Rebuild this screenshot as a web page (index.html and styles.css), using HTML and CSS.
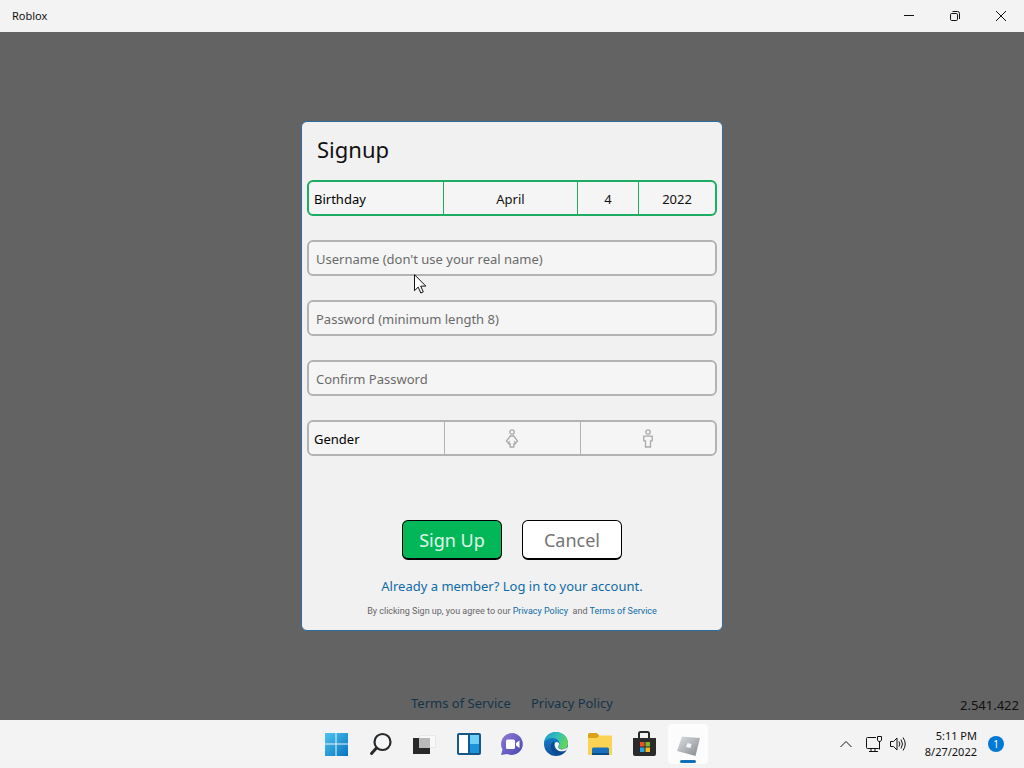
FILE: index.html
```html
<!DOCTYPE html>
<html lang="en">
  <head>
    <meta charset="utf-8">
    <title>Roblox</title>
    <link rel="stylesheet" href="styles.css">
  </head>
  <body>
    <header class="titlebar">
      <span class="window-title">Roblox</span>
      <div class="window-controls">
        <button aria-label="Minimize">
          <svg width="12" height="12" viewBox="0 0 12 12"><path d="M1 5.500h10"/></svg>
        </button>
        <button aria-label="Restore">
          <svg width="12" height="12" viewBox="0 0 12 12"><rect x="1.500" y="3.500" width="7" height="7" rx="1.200"/><path d="M3.500 1.500H8.500a2 2 0 0 1 2 2v5.500"/></svg>
        </button>
        <button aria-label="Close">
          <svg width="12" height="12" viewBox="0 0 12 12"><path d="M1 1l10 10M11 1L1 11"/></svg>
        </button>
      </div>
    </header>

    <main>
      <div class="overlay">
        <form class="dialog" onsubmit="return false">
          <h1>Signup</h1>

          <div class="group birthday" role="group" aria-labelledby="birthday">
            <span class="group-label" id="birthday">Birthday</span>
            <select aria-label="Month"><option>April</option></select>
            <select aria-label="Day"><option>4</option></select>
            <select aria-label="Year"><option>2022</option></select>
          </div>

          <div class="field">
            <input type="text" aria-label="Username" placeholder="Username (don't use your real name)">
            <svg class="cursor" width="13" height="21" viewBox="0 0 13 21"><path d="M.5.7v16l3.700-3.600 2.600 5.900 2.500-1.100-2.600-5.800h5.100z"/></svg>
          </div>
          <div class="field">
            <input type="password" aria-label="Password" placeholder="Password (minimum length 8)">
          </div>
          <div class="field">
            <input type="password" aria-label="Confirm Password" placeholder="Confirm Password">
          </div>

          <div class="group gender" role="radiogroup" aria-labelledby="gender">
            <span class="group-label" id="gender">Gender</span>
            <label>
              <input type="radio" name="gender" value="female" aria-label="Female">
              <svg width="14" height="20" viewBox="0 0 14 20"><circle cx="7" cy="3" r="2.200"/><path d="M5.300 7h3.400L12.500 12l-1.500 1.800-1.200-.8.200 2H8.800v3H5.200v-3H4l.2-2-1.200.8L1.500 12z"/></svg>
            </label>
            <label>
              <input type="radio" name="gender" value="male" aria-label="Male">
              <svg width="14" height="20" viewBox="0 0 14 20"><circle cx="7" cy="3" r="2.200"/><path d="M2.800 7.200h8.400v4.600H9.500v6.200h-5v-6.200H2.800z"/></svg>
            </label>
          </div>

          <div class="actions">
            <button class="signup" type="submit">Sign Up</button>
            <button class="cancel" type="button">Cancel</button>
          </div>
          <p class="login"><a href="#">Already a member? Log in to your account.</a></p>
          <p class="legal">By clicking Sign up, you agree to our <a href="#">Privacy Policy</a>&nbsp; and <a href="#">Terms of Service</a></p>
        </form>
      </div>

      <footer>
        <nav>
          <a href="#">Terms of Service</a>
          <a href="#">Privacy Policy</a>
        </nav>
        <span class="version">2.541.422</span>
      </footer>
    </main>

    <div class="taskbar">
      <div class="apps">
        <button aria-label="Start">
          <svg width="26" height="26" viewBox="0 0 26 26">
            <defs><linearGradient id="win" x1="0" y1="0" x2="1" y2="1"><stop offset="0" stop-color="#4cc5f1"/><stop offset="1" stop-color="#0873bf"/></linearGradient></defs>
            <path fill="url(#win)" d="M2 2h10.500v10.500H2zM13.500 2H25v10.500H13.500zM2 13.500h10.500V25H2zM13.500 13.500H25V25H13.500z"/>
          </svg>
        </button>
        <button aria-label="Search">
          <svg width="26" height="26" viewBox="0 0 26 26"><circle cx="15.500" cy="11" r="8" fill="#f5f6f7" stroke="#292929" stroke-width="2.200"/><path d="M9.500 17L4.500 22.500" stroke="#292929" stroke-width="3" stroke-linecap="round"/></svg>
        </button>
        <button aria-label="Task view">
          <svg width="26" height="26" viewBox="0 0 26 26"><path fill="#292929" d="M2 7h17v16H2z"/><path fill="#f8f8f8" stroke="#e8e8e8" d="M8.500 4.500h16v12h-16z"/><path fill="#b9b9b9" d="M8 7h11v10H8z"/></svg>
        </button>
        <button aria-label="Widgets">
          <svg width="26" height="26" viewBox="0 0 26 26"><rect x="2" y="2" width="24" height="22" rx="2" fill="#17578a"/><path fill="#fff" d="M4 4h9v18H4z"/><path fill="#6ed0fb" d="M15 4h9v9h-9z"/><path fill="#1c94dc" d="M15 13h9v9h-9z"/></svg>
        </button>
        <button aria-label="Chat">
          <svg width="26" height="26" viewBox="0 0 26 26">
            <defs><linearGradient id="chat" x1="0" y1="0" x2="1" y2="1"><stop offset="0" stop-color="#927cd0"/><stop offset="1" stop-color="#4844b6"/></linearGradient></defs>
            <path fill="url(#chat)" d="M13 2a11 11 0 1 1-4.800 21L2 24l1.500-5.500A11 11 0 0 1 13 2z"/><rect x="7" y="8.500" width="9" height="9.500" rx="1.500" fill="#fff"/><path fill="#fff" d="M17 12l3.500-2.500v7.500L17 14.500z"/>
          </svg>
        </button>
        <button aria-label="Microsoft Edge">
          <svg width="26" height="26" viewBox="0 0 26 26">
            <defs>
              <linearGradient id="edge-top" x1="0" y1="0" x2="1" y2=".4"><stop offset="0" stop-color="#1b9ad6"/><stop offset=".6" stop-color="#35c2b1"/><stop offset="1" stop-color="#63d45b"/></linearGradient>
              <linearGradient id="edge-base" x1="0" y1="0" x2="0" y2="1"><stop offset="0" stop-color="#168bd5"/><stop offset="1" stop-color="#104f9e"/></linearGradient>
            </defs>
            <circle cx="13" cy="13" r="12" fill="url(#edge-base)"/>
            <path fill="#0d4b91" d="M11 10c-3 2-4 5-2.500 8.500S14 24.500 17 24c3-.6 5.500-3 6.500-5-3 2-7.500 2-10-.5-2.500-2-3-5-2.500-8.500z"/>
            <path fill="url(#edge-top)" d="M1.200 11C2 5 7 1 13 1c7 0 12 5 12 11 0 4-3 6-6 6-2.500 0-4-1-3.800-2 .3-1 1.300-1.500 1.300-3.500 0-3-3-5.500-7-5.500-4 0-7 2-8.300 4z"/>
            <path fill="#f3f3f3" d="M12 12c1-2 4-1 4.200 1 0 1.500-1.700 2.500-1 3.800.9 1.300 3 1.900 5 1.500 2-.3 3.500-1.500 4.200-2.500l-.8 3c-3 2.300-7.600 1.900-9.900-.4C11.800 16.600 11.200 14 12 12z"/>
          </svg>
        </button>
        <button aria-label="File Explorer">
          <svg width="26" height="26" viewBox="0 0 26 26"><path fill="#dda318" d="M1 3.500q0-1.500 1.500-1.500H10l2.500 3H24v8H1z"/><path fill="#fbd354" d="M1 7h9l2.500-2.500H25V24H1z"/><path fill="#1b70bd" d="M5 18q0-1.500 1.500-1.500h14q1.500 0 1.500 1.500v6H5z"/><path fill="#0c4d87" d="M5 22h17v2H5z"/></svg>
        </button>
        <button aria-label="Microsoft Store">
          <svg width="26" height="26" viewBox="0 0 26 26"><path d="M8 8V2.500q0-1.500 1.500-1.500h7Q18 1 18 2.500V8" fill="none" stroke="#2a2a2a" stroke-width="2"/><path fill="#2b2b2b" d="M2 7h23v16q0 2-2 2H4q-2 0-2-2z"/><path fill="#ee5028" d="M9 11h4.500v4.500H9z"/><path fill="#7fb72f" d="M14.500 11H19v4.500h-4.500z"/><path fill="#23a5e8" d="M9 16.500h4.500V21H9z"/><path fill="#f7bb19" d="M14.500 16.500H19V21h-4.500z"/></svg>
        </button>
        <button class="active" aria-label="Roblox">
          <svg width="26" height="26" viewBox="0 0 26 26">
            <defs><linearGradient id="rbx" x1="0" y1="0" x2="1" y2="1"><stop offset="0" stop-color="#dde0e3"/><stop offset="1" stop-color="#858a90"/></linearGradient></defs>
            <path fill="url(#rbx)" d="M7 5.500L25 7l-4.500 18L2 20z"/><path fill="#f5f7fa" d="M12.500 12l4 1-1 4-4.500-1z"/>
          </svg>
        </button>
      </div>
      <div class="tray">
        <button class="chevron" aria-label="Show hidden icons">
          <svg width="14" height="14" viewBox="0 0 14 14"><path d="M1.500 10L7 4.500l5.500 5.500"/></svg>
        </button>
        <button class="network" aria-label="Network">
          <svg width="18" height="18" viewBox="0 0 18 18"><path d="M11 2.500H2.500q-1 0-1 1v9q0 1 1 1h11q1 0 1-1V8M6 13.500v3M10 13.500v3M4 16.500h9M12.500 1.500h4v3.500l-1 1.500h-2l-1-1.500zM14.500 6.500v8"/></svg>
        </button>
        <button class="volume" aria-label="Volume">
          <svg width="18" height="18" viewBox="0 0 18 18"><path d="M1.500 6.500h3l3.500-3.500v12l-3.500-3.500h-3zM10 6.500q1.700 2.500 0 5M12 4.500q3 4.500 0 9M14 2.500q4.500 6.500 0 13"/></svg>
        </button>
        <div class="clock">
          <time>5:11 PM</time>
          <time>8/27/2022</time>
        </div>
        <span class="badge">1</span>
      </div>
    </div>
  </body>
</html>
```
FILE: styles.css
```css
* {
  box-sizing: border-box;
}

body {
  margin: 0;
  min-height: 100vh;
  display: flex;
  flex-direction: column;
  font-family: "Noto Sans", "Open Sans", sans-serif;
  font-size: 13px;
  color: #111;
  background-color: #636363;
}

button,
input,
select {
  font-family: inherit;
  font-size: inherit;
  color: inherit;
}

button {
  padding: 0;
  border: none;
  background: none;
}

a {
  color: #0f6ba8;
  text-decoration: none;
}

svg {
  display: block;
}

/* window frame */
.titlebar {
  height: 32px;
  display: flex;
  justify-content: space-between;
  background-color: #f3f3f3;
}

.window-title {
  padding-left: 12px;
  font-size: 11px;
  line-height: 32px;
}

.window-controls {
  display: flex;
}

.window-controls button {
  width: 46px;
  display: grid;
  place-items: center;
}

.window-controls svg,
.tray svg {
  fill: none;
  stroke: #111;
}

/* page behind the dialog */
main {
  flex: 1;
  position: relative;
  display: flex;
  flex-direction: column;
  justify-content: flex-end;
  min-height: 600px;
}

footer {
  display: grid;
  grid-template-columns: 1fr auto 1fr;
  align-items: center;
  padding: 0 5px 4px;
}

footer nav {
  grid-column: 2;
  display: flex;
  gap: 20px;
  padding-bottom: 4px;
}

footer a {
  color: #14344a;
}

.version {
  text-align: right;
}

/* signup dialog */
.overlay {
  position: absolute;
  inset: 0;
  display: grid;
  place-items: center;
}

.dialog {
  width: 422px;
  max-width: 100%;
  padding: 7px 5px 10px;
  display: flex;
  flex-direction: column;
  border: 1px solid #31699b;
  border-radius: 6px;
  background-color: #f1f1f1;
}

h1 {
  margin: 0 0 11px;
  padding-left: 10px;
  font-size: 22px;
  font-weight: normal;
  line-height: 40px;
}

.group,
.field {
  height: 36px;
  margin-bottom: 24px;
}

.group {
  display: grid;
  border: 2px solid #b3b3b3;
  border-radius: 6px;
  background-color: #f5f5f5;
}

.birthday {
  grid-template-columns: 134fr 134fr 61fr 77fr;
  border-color: #1eab63;
}

.gender {
  grid-template-columns: repeat(3, 1fr);
}

.group-label {
  padding-left: 5px;
  line-height: 34px;
  color: #000;
}

.group select {
  min-width: 0;
  padding: 0;
  appearance: none;
  border: none;
  border-left: 1px solid #1eab63;
  background: none;
  text-align: center;
  text-align-last: center;
}

.gender label {
  display: grid;
  place-items: center;
  border-left: 1px solid #b3b3b3;
}

.gender input,
.gender svg {
  grid-area: 1 / 1;
}

.gender input {
  margin: 0;
  width: 100%;
  height: 100%;
  appearance: none;
}

.gender svg {
  fill: none;
  stroke: #aaa;
  stroke-width: 1.3;
}

.field {
  position: relative;
}

.field input {
  width: 100%;
  height: 100%;
  padding: 1px 7px 0;
  border: 2px solid #b3b3b3;
  border-radius: 6px;
  background-color: #f5f5f5;
}

.field input::placeholder {
  color: #6b6b6b;
}

.cursor {
  position: absolute;
  left: 107px;
  top: 34px;
  fill: #fff;
  stroke: #111;
}

.actions {
  display: flex;
  justify-content: center;
  gap: 20px;
  margin: 40px 0 14px;
}

.actions button {
  width: 100px;
  height: 40px;
  border: 1px solid #000;
  border-bottom-width: 2px;
  border-radius: 6px;
  font-size: 18px;
}

.actions .signup {
  color: #e2f7ea;
  background-color: #02b757;
}

.actions .cancel {
  color: #757575;
  background-color: #fff;
}

.login,
.legal {
  margin: 0;
  text-align: center;
}

.login {
  margin-bottom: 4px;
  line-height: 24px;
}

.legal {
  font-family: Roboto, "Open Sans", sans-serif;
  font-size: 9px;
  line-height: 18px;
  color: #666;
}

/* taskbar */
.taskbar {
  height: 48px;
  display: grid;
  grid-template-columns: 1fr auto 1fr;
  align-items: center;
  background-color: #f3f3f3;
}

.apps {
  grid-column: 2;
  display: flex;
  gap: 4px;
}

.apps button {
  width: 40px;
  height: 40px;
  display: grid;
  place-items: center;
}

.apps .active {
  position: relative;
  border-radius: 4px;
  background-color: #fcfcfc;
}

.apps .active::after {
  content: "";
  position: absolute;
  left: 12px;
  bottom: 1px;
  width: 16px;
  height: 3px;
  border-radius: 2px;
  background-color: #146fb9;
}

.tray {
  display: flex;
  justify-content: flex-end;
  align-items: center;
  padding-right: 20px;
}

.chevron {
  margin-right: 12px;
}

.network {
  margin-right: 6px;
}

.clock {
  margin: 0 11px 0 18px;
  font-size: 11px;
  line-height: 16px;
  text-align: right;
}

.clock time {
  display: block;
}

.badge {
  width: 16px;
  height: 16px;
  border-radius: 50%;
  background-color: #0078d4;
  color: #fff;
  font-size: 10px;
  line-height: 16px;
  text-align: center;
}
```
